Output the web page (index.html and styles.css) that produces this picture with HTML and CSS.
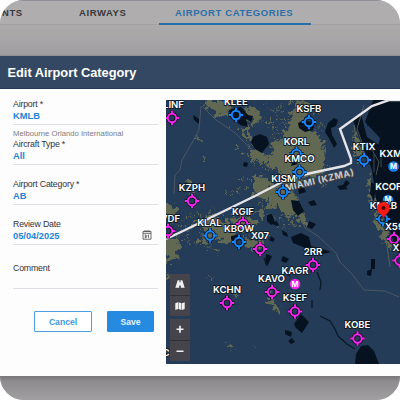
FILE: index.html
```
<!DOCTYPE html>
<html lang="en">
    <head>
        <meta charset="UTF-8" />
        <meta name="viewport" content="width=device-width, initial-scale=1.0" />
        <title>Edit Airport Category</title>
        <link rel="stylesheet" href="styles.css">
    </head>

    <body>
        <div class="app">
            <nav class="tabs">
                <div class="tab tab-first">NTS</div>
                <div class="tab tab-airways">AIRWAYS</div>
                <div class="tab tab-active">AIRPORT CATEGORIES</div>
                <div class="tab tab-rest"></div>
            </nav>
            <div class="backdrop"></div>

            <div class="modal">
                <h1>Edit Airport Category</h1>
                <div class="content">
                    <form class="form">
                        <div class="field">
                            <label>Airport *</label>
                            <div class="value">KMLB</div>
                        </div>
                        <div class="helper">Melbourne Orlando International</div>
                        <div class="field">
                            <label>Aircraft Type *</label>
                            <div class="value">All</div>
                        </div>
                        <div class="field category">
                            <label>Airport Category *</label>
                            <div class="value">AB</div>
                        </div>
                        <div class="field review">
                            <label>Review Date</label>
                            <div class="value">
                                05/04/2025
                                <svg class="calendar" viewBox="0 0 10 10">
                                    <path d="M1 1.5h8v7.7H1zM1 3.3h8M3 0v2M5 0v2M7 0v2" />
                                    <path d="M2.7 5h1.5v2.7H2.7M2.7 6.3h1.5M5.7 5.3l.8-.4v3" />
                                </svg>
                            </div>
                        </div>
                        <div class="field comment">
                            <label>Comment</label>
                            <div class="value"></div>
                        </div>
                        <div class="buttons">
                            <button type="button" class="cancel">Cancel</button>
                            <button type="button" class="save">Save</button>
                        </div>
                    </form>

                    <div class="map">
                        <svg class="chart" viewBox="166 100 234 264">
                            <defs>
                                <filter id="rough" x="-10%" y="-10%" width="120%" height="120%">
                                    <feTurbulence type="fractalNoise" baseFrequency="0.2" numOctaves="3" seed="4" />
                                    <feDisplacementMap in="SourceGraphic" scale="15" xChannelSelector="R" yChannelSelector="G" />
                                </filter>
                                <g id="apt">
                                    <path class="halo" d="M0-7.4V-4M0 4v3.4M-7.4 0H-4M4 0h3.4" />
                                    <circle class="halo" r="4.2" />
                                    <path d="M0-7.200V-4M0 4v3.200M-7.200 0h3.200M4 0h3.200" />
                                    <circle r="4.2" />
                                </g>
                            </defs>

                            <!-- land cover -->
                            <g class="land" filter="url(#rough)">
                                <path d="M205 100h22l3 10-6 7-9-2-3-7-8-2z" />
                                <path d="M243 110l14-3 4 12-9 4-8-6zM238 124l10 4 4 12-6-1z" />
                                <path d="M294 101l14-1 4 9-7 10 1 12 12 3 6 12 1 18-7 12-14 3-10 9-10-3-6-14-12-7 2-9 7-2-4-9 10-2 2-11 8-5-2-13 8-6z" />
                                <path d="M250 150l12 2 8 8-9 3-11-5zM253 175l12 3 9 10-2 9-12 2-7-8zM268 187l20-2 8 9 2 15-10 6-9-7-12-2z" />
                                <path d="M187 181l5-2 4 8-4 5-5-4zM166 204l9 2 4 7-5 5-8-1zM166 237l10 1 6 8-5 7-5 9-6 2z" />
                                <path d="M193 223l8-6 14-1 12 6 11 12-6 8-15-2-14 4-5-7 8-4zM230 217l18-2 8 7-5 10-14-2z" />
                                <path d="M210 248l10 1-4 4zM242 240l20 1 4 7-17 0zM255 210l10 2-3 6zM296 207l8 5 4 12-6 1-6-8z" />
                                <path d="M355 128l4 10 4 13-3 14-6-12zM369 174l5 8 2 23-5 1-3-20zM373 210l8 8 10 24 4 10-8-6-12-23z" />
                                <path d="M271 293l6 11 3 11-6-4-7-14zM227 345l6 1 2 2-9 1zM235 292l3 5-5-1zM280 195l9 5 4 24-6-8z" />
                                <path d="M196 138h4l1 3-5-1zM202 158l5 1-4 2zM209 275l3 1-2 2zM253 346l3 1-2 1zM165 272l4 1 1 4-4 1zM229 125l4 3-5-1z" />
                            </g>
                            <g class="specks" filter="url(#rough)">
                                <path d="M259 116l14 8M271 128l17 8M247 145l10 4M275 117l16 4M238 179l14 1M226 193l20-3M210 210l13 4M256 202l25-5M325 147l2 8M323 180l2 8M177 234l10 8M172 254l8 5M240 235l30 2M275 226l20-2M320 123l5 9M190 194l8 11M388 215l5 19" />
                                <path d="M262 106l26 5M266 122l22 3M280 108l12-5M272 133l10 12M252 160l20 8M236 148l16 10M256 168l18 4M244 214l30-6M262 206l34 4M266 218l24-3M186 216l16-2M196 244l26 6M184 226l6 20M168 220l14 6M310 104l8 12M312 128l12 4M322 140l4 30M276 216l12 14" />
                            </g>

                            <!-- water -->
                            <g class="water">
                                <path d="M253 137l7-3 7 3 2 7-7 9-7-4-4-7zM229 110l12-3 7 8 5 1-2 6-5-3 2 8-8-2-9-9zM193 115l6 4v5l-5-4zM244 162l4 1-1 4-4-1z" />
                                <path d="M298 123l6-3 11 3-2 7-8 2-6-4zM293 159l5 5-7 2zM298 188l5-3 3 7-7 2z" />
                                <path d="M328 123l6-5 4 2-2 6-5 2 1 7 5 9-3 4-5-10-4-6z" />
                                <path d="M353 120l8-6 6 23 12 8 2 10 6 8 4 15 9 18v61l-8-20-8-25-8-13-4-29-12-30z" />
                                <path d="M365 122l8-22h27v115l-8-10-7-36-8-17 3-14z" />
                                <path d="M350 183l-4 4 2 2-8 1-3-4 6-1 3-5zM371 182l5 3-2 17-4-9z" />
                                <path d="M267 215l5-1 3 9-4 2-4-4zM273 223l4-2 2 5-5-1zM231 236l6-1 2 5-6 3-2-4z" />
                                <path d="M266 254l6 2-4 9-3-1zM271 236l4 3-2 3-4-2zM283 256l6 3-3 4-5-2zM282 230l5 3 1 4-5-2z" />
                                <path d="M291 237l10-4 8 4 2 9 12 3 8 3-12 3-9-3-7-5-10-4zM308 202l6-2 3 5-6 1zM291 200l8 1 5 10-6 5-5-6zM309 221l7 3-4 5-5-2z" />
                                <path d="M301 314l8 8-7 11-6-5-2-4zM285 330l7 2-1 5-6-3zM292 338l3 4-4 2-3-3z" />
                                <path d="M371 259h4v10h-4zM367 271l5-2-1 7-4-1zM372 105l8 7-4 10-9 4z" />
                                <path d="M356 354l5-8 7-1 6 6 5 13h-24z" />
                            </g>
                            <path class="shore" d="M364 105l-7 24 6 16 9 5 7 12-3 13M354 125l2 17M374 204l9 25 4 17 3 21" />
                            <path class="creek" d="M312 300v8M320 316l10 5 5 8 3 7 9 8 8 5M317 272l4 10-1 8M264 258l3 8M282 270l8 6" />
                            <path class="road" d="M201 106l-2 24-7 13-10 17-2 10-5 5-1 19M202 106l14 14 18 12 20 20M301 218l4 10 13 8 18 17 4 9 12 12 12 16 21 1 14 6M374 154v18M381 155v12" />

                            <!-- FIR boundary -->
                            <path class="boundary" d="M166 239l17-8 72-35 27-14 20-7 42-9 7-3v-4l-11-30 32-23 17-6h12" />
                            <text class="fir" transform="translate(286 191) rotate(-13)" textLength="70">MIAMI (KZMA)</text>

                            <g class="magenta">
                                <use href="#apt" x="172" y="118" />
                                <use href="#apt" x="192" y="201" />
                                <use href="#apt" x="168" y="231" />
                                <use href="#apt" x="243" y="224" />
                                <use href="#apt" x="260" y="249" />
                                <use href="#apt" x="313" y="265" />
                                <use href="#apt" x="272" y="292" />
                                <use href="#apt" x="227" y="303" />
                                <use href="#apt" x="295" y="311.500" />
                                <use href="#apt" x="357.500" y="338.500" />
                                <use href="#apt" x="394" y="239" />
                                <use href="#apt" x="399.500" y="260.500" />
                            </g>
                            <g class="blue">
                                <use href="#apt" x="236" y="115" />
                                <use href="#apt" x="309" y="122" />
                                <use href="#apt" x="296.500" y="154" />
                                <use href="#apt" x="299.500" y="172" />
                                <use href="#apt" x="283" y="192" />
                                <use href="#apt" x="364" y="160" />
                                <use href="#apt" x="210" y="235.500" />
                                <use href="#apt" x="239" y="242" />
                                <use href="#apt" x="383" y="219" />
                            </g>
                            <circle class="mil mil-magenta" cx="295" cy="284" r="5.300" />
                            <circle class="mil mil-blue" cx="393.500" cy="166.500" r="5.300" />
                            <circle class="mil mil-blue" cx="388" cy="200" r="5.300" />
                            <g class="m">
                                <text x="295" y="286.700">M</text>
                                <text x="393.500" y="169.200">M</text>
                                <text x="388" y="202">M</text>
                            </g>

                            <g class="labels">
                                <text x="173.500" y="107.500">LINF</text>
                                <text x="236" y="105">KLEE</text>
                                <text x="309" y="111.500">KSFB</text>
                                <text x="296.500" y="145">KORL</text>
                                <text x="299.500" y="162">KMCO</text>
                                <text x="283.500" y="181.500">KISM</text>
                                <text x="364" y="149.500">KTIX</text>
                                <text x="394" y="156.500">KXMR</text>
                                <text x="388.500" y="190">KCOF</text>
                                <text x="192" y="191">KZPH</text>
                                <text x="167" y="221.500">KVDF</text>
                                <text x="243" y="214.500">KGIF</text>
                                <text x="209.500" y="225.500">KLAL</text>
                                <text x="239" y="231.500">KBOW</text>
                                <text x="260" y="238.500">X07</text>
                                <text x="313" y="255">2RR</text>
                                <text x="295" y="274">KAGR</text>
                                <text x="271.500" y="282">KAVO</text>
                                <text x="227" y="292.500">KCHN</text>
                                <text x="295" y="301">KSEF</text>
                                <text x="357.500" y="328">KOBE</text>
                                <text x="383.500" y="209">KMLB</text>
                                <text x="394.500" y="229.500">X59</text>
                                <text x="402" y="250.500">X26</text>
                                <text x="166" y="355.500">C</text>
                            </g>

                            <path class="pin" d="M383.500 219c-1-5-6.300-6-6.300-10.700a6.300 6.300 0 0 1 12.600 0c0 4.700-5.300 5.700-6.300 10.700z" />
                            <circle class="pin-dot" cx="383.500" cy="208" r="2" />
                        </svg>

                        <div class="controls">
                            <div class="group">
                                <svg viewBox="0 0 20 20">
                                    <path class="solid" d="M7.700 6h1.800v2h1V6h1.800l2.400 7.500h-3.900v-2.200H9.200v2.200H5.300z" />
                                </svg>
                                <svg viewBox="0 0 20 20">
                                    <path class="solid" d="M5.300 7L8 6v6.800l-2.700 1zM8.500 6l3 1v6.800l-3-1zM12 7l2.700-1v6.800l-2.700 1z" />
                                </svg>
                            </div>
                            <div class="group">
                                <svg viewBox="0 0 20 20"><path class="sign" d="M6.500 10h7M10 6.500v7" /></svg>
                                <svg viewBox="0 0 20 20"><path class="sign" d="M6.500 10h7" /></svg>
                            </div>
                        </div>
                    </div>
                </div>
            </div>
            <div class="footer"></div>
        </div>
    </body>
</html>
```
FILE: styles.css
```
* {
    box-sizing: border-box;
}
body {
    margin: 0;
    background-color: #fff;
    font-family: "Liberation Sans", Arial, sans-serif;
}
.app {
    width: 400px;
    height: 400px;
    overflow: hidden;
    border-radius: 24px;
    background-color: #aeacad;
    display: flex;
    flex-direction: column;
}
.tabs {
    display: flex;
    height: 25px;
    border-top: 1px solid #918e98;
    background-color: #afadae;
    font-size: 9.5px;
    font-weight: bold;
    letter-spacing: 0.6px;
    line-height: 23px;
    color: #38383b;
    white-space: nowrap;
}
.tab {
    border-bottom: 1px solid #a2a0a2;
}
.tab-first {
    width: 47px;
    padding-left: 2px;
}
.tab-airways {
    width: 112px;
    padding-left: 32px;
}
.tab-active {
    width: 152px;
    padding-left: 16px;
    color: #2a70a8;
    border-bottom: 2px solid #286fa5;
}
.tab-rest {
    flex: 1;
}
.backdrop {
    height: 31px;
    background: linear-gradient(#acaaab, #a09ea0);
    border-bottom: 1px solid #918f94;
}
.modal {
    height: 320px;
    background-color: #fdfdfe;
}
h1 {
    margin: 0;
    height: 33px;
    padding-left: 7.5px;
    background-color: #344864;
    border-bottom: 1px solid #243a5b;
    color: #fff;
    font-size: 12.8px;
    line-height: 34px;
}
.content {
    display: flex;
    justify-content: space-between;
}
.form {
    width: 158px;
    padding: 9px 0 0 13px;
}
.field {
    height: 27px;
    border-bottom: 1px solid #dfe0e5;
    line-height: 13px;
}
label {
    display: block;
    height: 12px;
    font-size: 8.8px;
    letter-spacing: -0.2px;
    color: #333338;
}
.value {
    display: flex;
    justify-content: space-between;
    height: 13px;
    font-size: 9.3px;
    font-weight: bold;
    color: #1e84d6;
}
.helper {
    height: 13px;
    padding-top: 2px;
    font-size: 7.7px;
    line-height: 13px;
    color: #7b7b82;
}
.category,
.review {
    margin-top: 13px;
}
.comment {
    margin-top: 17px;
}
.calendar {
    width: 10px;
    height: 10px;
    margin-right: 6px;
    fill: none;
    stroke: #444;
    stroke-width: 0.8;
}
.buttons {
    display: flex;
    gap: 15px;
    margin: 22px 0 0 21px;
}
button {
    height: 21px;
    padding: 0;
    border: 1px solid #4f9fe0;
    border-radius: 1px;
    font-family: inherit;
    font-size: 8.6px;
    font-weight: bold;
}
.cancel {
    width: 58px;
    background-color: #fff;
    color: #3d98df;
}
.save {
    width: 47px;
    background-color: #268be0;
    border-color: #268be0;
    color: #e6f3ff;
}
.map {
    position: relative;
    width: 234px;
    height: 264px;
    margin-top: 11px;
    background-color: #243c57;
    overflow: hidden;
}
.chart {
    display: block;
    width: 234px;
    height: 264px;
    fill: none;
}
.land {
    fill: #626952;
}
.specks {
    stroke: #626952;
    stroke-width: 1.8;
    stroke-dasharray: 3 2 1 3;
}
.water {
    fill: #06121f;
}
.shore {
    stroke: #66705c;
    stroke-width: 0.7;
}
.creek {
    stroke: #0a1827;
    stroke-width: 1.3;
}
.road {
    stroke: #5c626b;
    stroke-width: 0.7;
}
.boundary {
    stroke: #e6e4e8;
    stroke-width: 2.4;
}
.fir {
    fill: #c9c9cc;
    stroke: #3c424a;
    stroke-width: 2px;
    paint-order: stroke;
    font: bold 9px Inter, sans-serif;
}
.magenta {
    stroke: #fb24ee;
    stroke-width: 1.9;
}
.blue {
    stroke: #1688ff;
    stroke-width: 1.9;
}
.halo {
    stroke: #0a1322;
    stroke-width: 3.6;
}
.mil-magenta {
    fill: #f126e4;
}
.mil-blue {
    fill: #1a82ee;
}
.m {
    fill: #fff;
    font: bold 7.5px Inter, sans-serif;
    text-anchor: middle;
}
.labels {
    fill: #fff;
    stroke: #101c2b;
    stroke-width: 1.8px;
    stroke-linejoin: round;
    paint-order: stroke;
    font: 600 9.6px Inter, sans-serif;
    text-anchor: middle;
}
.pin {
    fill: #f51b13;
    stroke: #a90d0b;
    stroke-width: 0.4;
}
.pin-dot {
    fill: #420706;
}
/* buttons floating over the map */
.controls {
    position: absolute;
    left: 4px;
    bottom: 3px;
    display: flex;
    flex-direction: column;
    gap: 3px;
}
.group {
    display: flex;
    flex-direction: column;
    gap: 1px;
    background-color: #302f34;
}
.group svg {
    display: block;
    width: 20px;
    height: 20.5px;
    background-color: #45444a;
}
.solid {
    fill: #f1f1f1;
}
.sign {
    stroke: #f1f1f1;
    stroke-width: 1.7;
}
.footer {
    flex: 1;
    background: linear-gradient(#777678, #8d8b8d 5px, #a19fa1);
}
```
